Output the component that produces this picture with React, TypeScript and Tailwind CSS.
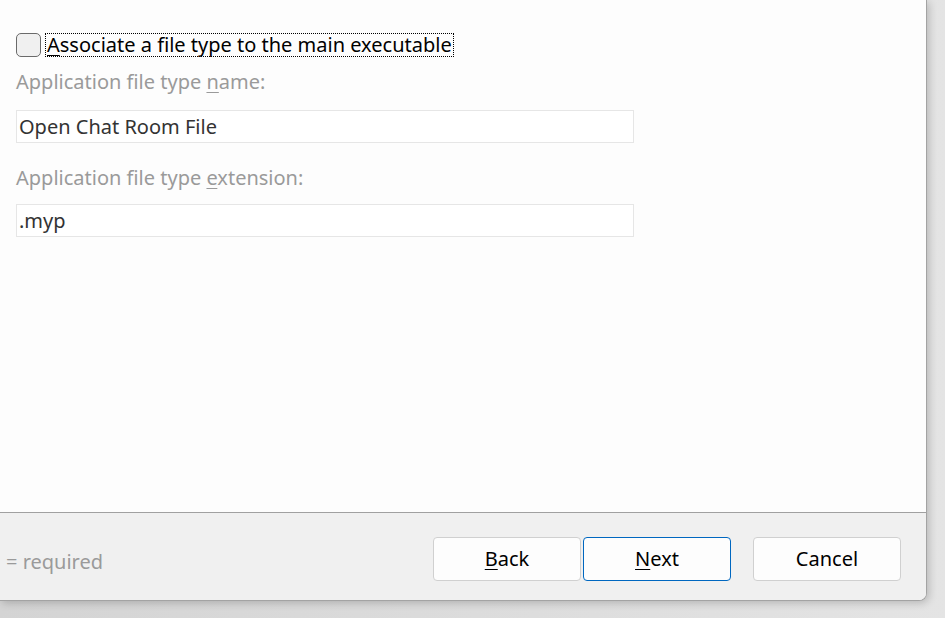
export default function App() {
  return (
    <div
      className="relative h-[618px] w-[945px] overflow-hidden bg-gradient-to-r from-[#d4d4d4] to-[#e4e4e4]"
      style={{ fontFamily: '"Segoe UI", "Noto Sans", sans-serif' }}
    >
      <div className="flex h-[601px] w-[927px] flex-col overflow-hidden rounded-br-[8px] border-r border-b border-[#a3a3a3] bg-[#fdfdfd] shadow-[2px_2px_8px_rgba(0,0,0,0.2)]">
        <div className="h-[513px] shrink-0 border-b border-[#a0a0a0] px-4 pt-[33px]">
          <div className="flex h-6 items-center">
            <span className="h-[24px] w-[25px] shrink-0 rounded-[5px] border-[1.5px] border-[#6a6a6a] bg-[#f0f0f0]" />
            <span className="ml-[4px] flex h-6 items-center border border-dotted border-black px-px text-[20px] leading-none text-black">
              <span className="underline underline-offset-[3px] decoration-1">A</span>ssociate a file type to the main executable
            </span>
          </div>
          <div className="mt-[13px] text-[20px] leading-[24px] text-[#9a9a9a]">
            Application file type <span className="underline underline-offset-[3px] decoration-1">n</span>ame:
          </div>
          <div className="mt-[16px] flex h-[33px] w-[618px] items-center border border-[#e6e6e6] bg-white px-[2px] text-[20px] text-[#333]">
            Open Chat Room File
          </div>
          <div className="mt-[23px] text-[20px] leading-[24px] text-[#9a9a9a]">
            Application file type <span className="underline underline-offset-[3px] decoration-1">e</span>xtension:
          </div>
          <div className="mt-[14px] flex h-[33px] w-[618px] items-center border border-[#e6e6e6] bg-white px-[2px] text-[20px] text-[#333]">
            .myp
          </div>
        </div>
        <div className="flex flex-1 items-center bg-[#f0f0f0] pl-[6px] pr-[25px] pt-[1px]">
          <span className="mt-[9px] text-[20px] text-[#9a9a9a]">= required</span>
          <div className="ml-auto mt-[4px] flex items-center">
            <button className="flex h-[44px] w-[148px] items-center justify-center rounded-[4px] border border-[#d0d0d0] bg-[#fdfdfd] text-[20px] text-black">
              <span className="underline underline-offset-[3px] decoration-1">B</span>ack
            </button>
            <button className="ml-[2px] flex h-[44px] w-[148px] items-center justify-center rounded-[4px] border border-[#0067c0] bg-[#fdfdfd] text-[20px] text-black">
              <span className="underline underline-offset-[3px] decoration-1">N</span>ext
            </button>
            <button className="ml-[22px] flex h-[44px] w-[148px] items-center justify-center rounded-[4px] border border-[#d0d0d0] bg-[#fdfdfd] text-[20px] text-black">
              Cancel
            </button>
          </div>
        </div>
      </div>
    </div>
  )
}
